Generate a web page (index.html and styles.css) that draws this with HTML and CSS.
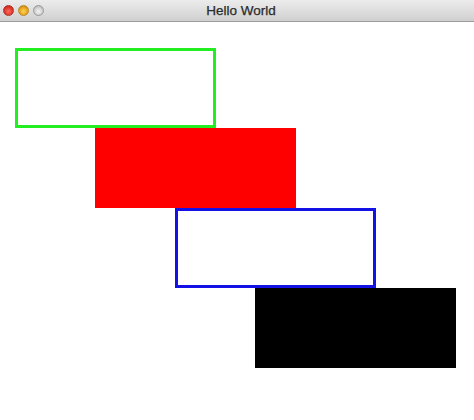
FILE: index.html
```html
<!DOCTYPE html>
<html>
<head>
<meta charset="utf-8">
<title>Hello World</title>
<link rel="stylesheet" href="styles.css">
</head>
<body>
<div class="window">
  <div class="titlebar">
    <div class="lights">
      <span class="light red"></span>
      <span class="light yellow"></span>
      <span class="light gray"></span>
    </div>
    <div class="title">Hello World</div>
  </div>
  <div class="canvas">
    <div class="box green"></div>
    <div class="box red-fill"></div>
    <div class="box blue"></div>
    <div class="box black-fill"></div>
  </div>
</div>
</body>
</html>
```
FILE: styles.css
```css
html, body {
  margin: 0;
  padding: 0;
  background: #ffffff;
}
.window {
  width: 474px;
  height: 420px;
  background: #ffffff;
  overflow: hidden;
}
.titlebar {
  height: 21px;
  display: flex;
  align-items: center;
  justify-content: center;
  position: relative;
  background: linear-gradient(to bottom, #ececec 0%, #dedede 50%, #cfcfcf 100%);
  border-bottom: 1px solid #9c9c9c;
}
.lights {
  position: absolute;
  left: 3px;
  top: 5px;
  display: flex;
  gap: 4px;
}
.light {
  width: 11px;
  height: 11px;
  border-radius: 50%;
  box-sizing: border-box;
}
.light.red {
  background: radial-gradient(circle at 50% 60%, #ff6a5e 0%, #e0392c 55%, #a8190f 100%);
  border: 1px solid #b0332a;
}
.light.yellow {
  background: radial-gradient(circle at 50% 60%, #ffd15a 0%, #e8a420 55%, #b57a0c 100%);
  border: 1px solid #b88a25;
}
.light.gray {
  background: radial-gradient(circle at 50% 60%, #f4f4f4 0%, #d0d0d0 55%, #a6a6a6 100%);
  border: 1px solid #9a9a9a;
}
.title {
  font-family: "Liberation Sans", Arial, sans-serif;
  font-size: 13.5px;
  font-weight: 500;
  -webkit-text-stroke: 0.25px #2a2a2a;
  color: #2a2a2a;
  padding-left: 8px;
  line-height: 21px;
}
.canvas {
  padding-top: 26px;
}
.box {
  width: 201px;
  height: 80px;
  box-sizing: border-box;
}
.green {
  margin-left: 15px;
  border: 3px solid #22ee22;
}
.red-fill {
  margin-left: 95px;
  background: #ff0000;
}
.blue {
  margin-left: 175px;
  border: 3px solid #1212e6;
}
.black-fill {
  margin-left: 255px;
  background: #000000;
}
```
